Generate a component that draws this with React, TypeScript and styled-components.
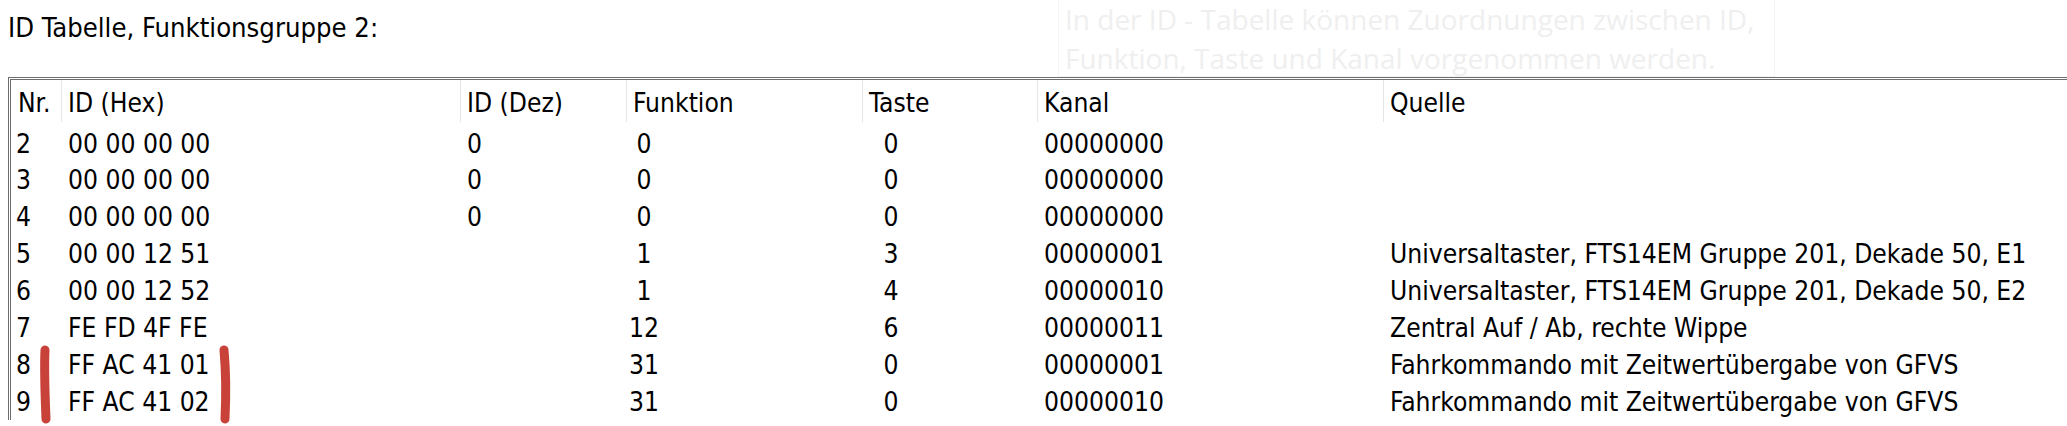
import React from 'react';
import styled, { createGlobalStyle } from 'styled-components';

const GlobalStyle = createGlobalStyle`
	html, body {
		margin: 0;
		padding: 0;
		background: #ffffff;
		overflow: hidden;
	}
`;

const COLUMNS = '50px 399px 166px 236px 175px 346px 1fr';
const ROW_HEIGHT = 36.86;

const rows = [
	{ nr: '2', hex: '00 00 00 00', dez: '0', funktion: '0', taste: '0', kanal: '00000000', quelle: '' },
	{ nr: '3', hex: '00 00 00 00', dez: '0', funktion: '0', taste: '0', kanal: '00000000', quelle: '' },
	{ nr: '4', hex: '00 00 00 00', dez: '0', funktion: '0', taste: '0', kanal: '00000000', quelle: '' },
	{ nr: '5', hex: '00 00 12 51', dez: '', funktion: '1', taste: '3', kanal: '00000001', quelle: 'Universaltaster, FTS14EM Gruppe 201, Dekade 50, E1' },
	{ nr: '6', hex: '00 00 12 52', dez: '', funktion: '1', taste: '4', kanal: '00000010', quelle: 'Universaltaster, FTS14EM Gruppe 201, Dekade 50, E2' },
	{ nr: '7', hex: 'FE FD 4F FE', dez: '', funktion: '12', taste: '6', kanal: '00000011', quelle: 'Zentral Auf / Ab, rechte Wippe' },
	{ nr: '8', hex: 'FF AC 41 01', dez: '', funktion: '31', taste: '0', kanal: '00000001', quelle: 'Fahrkommando mit Zeitwertübergabe von GFVS' },
	{ nr: '9', hex: 'FF AC 41 02', dez: '', funktion: '31', taste: '0', kanal: '00000010', quelle: 'Fahrkommando mit Zeitwertübergabe von GFVS' },
];

export default function App() {
	return (
		<Page>
			<GlobalStyle />
			<Title>ID Tabelle, Funktionsgruppe 2:</Title>
			<Tooltip>
				In der ID - Tabelle können Zuordnungen zwischen ID,
				<br />
				Funktion, Taste und Kanal vorgenommen werden.
			</Tooltip>
			<ListView>
				<HeaderRow>
					<HeaderCell $first>Nr.</HeaderCell>
					<HeaderCell>ID (Hex)</HeaderCell>
					<HeaderCell>ID (Dez)</HeaderCell>
					<HeaderCell>Funktion</HeaderCell>
					<HeaderCell>Taste</HeaderCell>
					<HeaderCell>Kanal</HeaderCell>
					<HeaderCell>Quelle</HeaderCell>
				</HeaderRow>
				{rows.map((row) => (
					<Row key={row.nr}>
						<Cell $indent={5}>{row.nr}</Cell>
						<Cell>{row.hex}</Cell>
						<Cell>{row.dez}</Cell>
						<Cell $indent={0}>
							<Centered $width={36}>{row.funktion}</Centered>
						</Cell>
						<Cell $indent={0}>
							<Centered $width={58}>{row.taste}</Centered>
						</Cell>
						<Cell>{row.kanal}</Cell>
						<Cell>{row.quelle}</Cell>
					</Row>
				))}
			</ListView>
			<Marks width="2067" height="426" viewBox="0 0 2067 426">
				<path d="M45 350 C44 370 45 395 46 419" />
				<path d="M224 350 C226 372 226 398 225 419" />
			</Marks>
		</Page>
	);
}

const Page = styled.div`
	position: relative;
	width: 2067px;
	height: 426px;
	padding-top: 10px;
	box-sizing: border-box;
	font-family: 'DejaVu Sans Condensed', 'DejaVu Sans', sans-serif;
	font-stretch: condensed;
	font-size: 26.2px;
	color: #000000;
`;

const Title = styled.div`
	padding-left: 8px;
	font-size: 27.2px;
	line-height: ${ROW_HEIGHT}px;
`;

const Tooltip = styled.div`
	position: absolute;
	left: 1058px;
	top: -12px;
	width: 717px;
	height: 89px;
	box-sizing: border-box;
	padding: 11px 0 0 6px;
	border: 1px solid #f4f4f4;
	background: #ffffff;
	color: #efefef;
	font-family: 'Open Sans', 'Noto Sans', sans-serif;
	font-stretch: normal;
	font-size: 28px;
	line-height: 39px;
	white-space: nowrap;
`;

const ListView = styled.div`
	position: relative;
	margin: 30.1px 0 0 8px;
	border-top: 3px double #6e6e6e;
	border-left: 3px double #6e6e6e;
`;

const HeaderRow = styled.div`
	display: grid;
	grid-template-columns: ${COLUMNS};
	margin-bottom: 4.1px;
`;

const HeaderCell = styled.div<{ $first?: boolean }>`
	padding: 4.7px 0 0 ${(p) => (p.$first ? 7 : 6)}px;
	border-left: ${(p) => (p.$first ? 'none' : '1px solid #e5e5e5')};
	line-height: ${ROW_HEIGHT}px;
	white-space: nowrap;
`;

const Row = styled.div`
	display: grid;
	grid-template-columns: ${COLUMNS};
	height: ${ROW_HEIGHT}px;
	line-height: ${ROW_HEIGHT}px;
`;

const Cell = styled.div<{ $indent?: number }>`
	padding-left: ${(p) => p.$indent ?? 7}px;
	white-space: nowrap;
`;

const Centered = styled.span<{ $width: number }>`
	display: inline-block;
	width: ${(p) => p.$width}px;
	text-align: center;
`;

const Marks = styled.svg`
	position: absolute;
	left: 0;
	top: 0;
	pointer-events: none;
	fill: none;
	stroke: #c8423a;
	stroke-width: 9;
	stroke-linecap: round;
`;
